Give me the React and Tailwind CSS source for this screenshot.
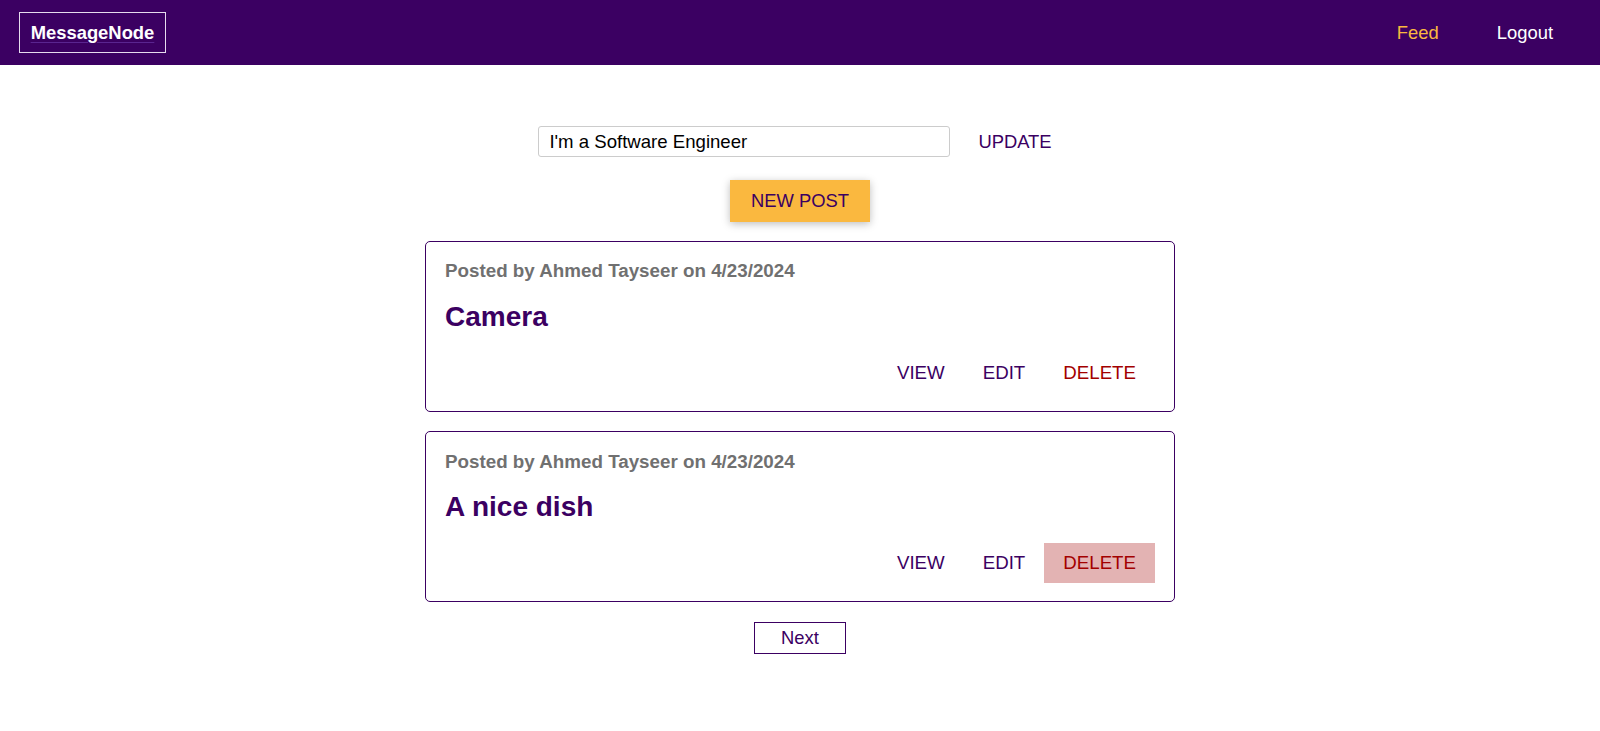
import React from 'react'

const posts = [
  { id: 1, author: 'Ahmed Tayseer', date: '4/23/2024', title: 'Camera', hover: false },
  { id: 2, author: 'Ahmed Tayseer', date: '4/23/2024', title: 'A nice dish', hover: true }
]

function Post({ post }) {
  return (
    <article className="w-[750px] border border-[#3b0062] rounded-[5px] px-[19px] pt-[18.4px] pb-[18.5px]">
      <h3 className="text-[18.8px] text-[#707070] font-bold">
        Posted by {post.author} on {post.date}
      </h3>
      <h1 className="mt-[19px] text-[28px] font-bold text-[#3b0062]">{post.title}</h1>
      <div className="mt-[19.2px] flex justify-end text-[18.7px]">
        <button className="h-[40px] px-[19px] text-[#3b0062]">VIEW</button>
        <button className="h-[40px] px-[19px] text-[#3b0062]">EDIT</button>
        <button
          className={`h-[40px] px-[19px] text-[#a30000] ${post.hover ? 'bg-[#e3b3b3]' : ''}`}
        >
          DELETE
        </button>
      </div>
    </article>
  )
}

export default function App() {
  return (
    <div className="min-h-screen bg-white font-['Liberation_Sans',Arial,sans-serif] text-[18.4px] leading-[1.15]">
      <header className="h-[65px] bg-[#3b0062] flex items-center justify-between pl-[19px] pr-[47px]">
        <div className="w-[147px] h-[41px] border border-[#e6dcee] flex items-center justify-center">
          <span className="font-bold text-white underline decoration-[#5a2590] underline-offset-[3px]">
            MessageNode
          </span>
        </div>
        <nav className="flex items-center">
          <a className="text-[#fab83f]">Feed</a>
          <a className="ml-[58px] text-white">Logout</a>
        </nav>
      </header>

      <main className="flex flex-col items-center pt-[56.5px] pb-[40px]">
        <form className="flex items-center pl-[9px]">
          <input
            type="text"
            defaultValue="I'm a Software Engineer"
            className="w-[412px] h-[31px] border border-[#cccccc] rounded-[3px] px-[10px] text-[18.6px] text-black outline-none"
          />
          <button type="button" className="ml-[9px] h-[40px] px-[19px] text-[#3b0062]">
            UPDATE
          </button>
        </form>

        <button className="mt-[18.5px] h-[42px] px-[21px] bg-[#fab83f] text-[#3b0062] shadow-[0_2px_8px_rgba(0,0,0,0.26)]">
          NEW POST
        </button>

        <section className="mt-[19px] flex flex-col gap-[19.5px]">
          {posts.map(post => (
            <Post key={post.id} post={post} />
          ))}
        </section>

        <button className="mt-[19.5px] h-[32px] px-[26px] border border-[#3b0062] text-[#3b0062]">
          Next
        </button>
      </main>
    </div>
  )
}
